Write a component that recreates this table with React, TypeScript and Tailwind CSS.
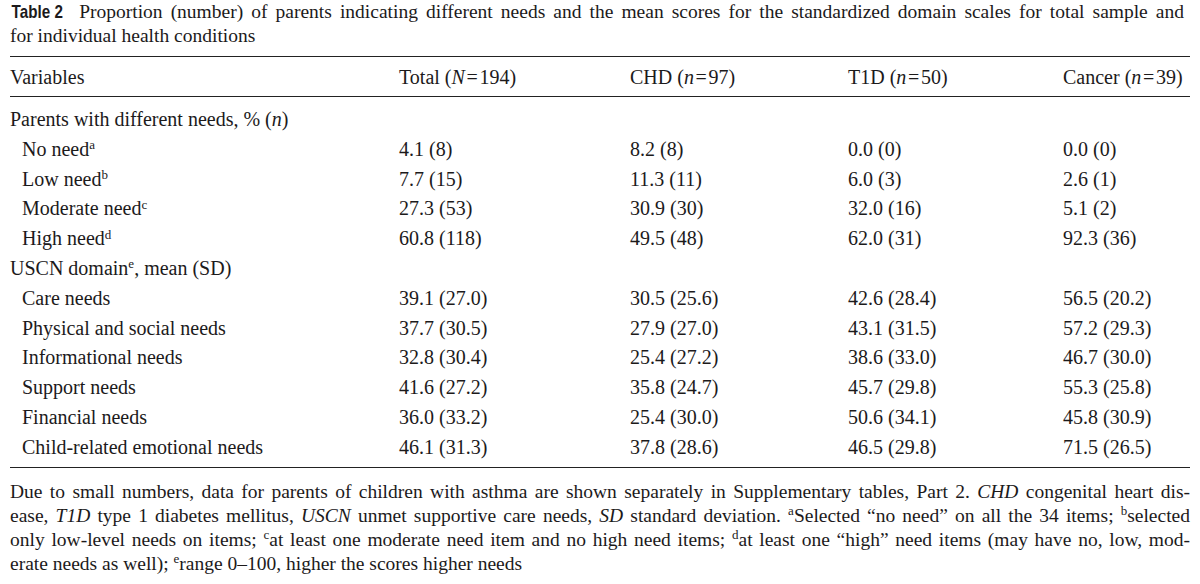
import React from "react";

const serif = { fontFamily: '"Liberation Serif", "Times New Roman", serif' };

type Row = { label: React.ReactNode; vals: string[]; indent: boolean };

const Sup = ({ c }: { c: string }) => <sup className="text-[13px]">{c}</sup>;

const rows: Row[] = [
  { label: <>Parents with different needs, % (<i>n</i>)</>, vals: [], indent: false },
  { label: <>No need<Sup c="a" /></>, vals: ["4.1 (8)", "8.2 (8)", "0.0 (0)", "0.0 (0)"], indent: true },
  { label: <>Low need<Sup c="b" /></>, vals: ["7.7 (15)", "11.3 (11)", "6.0 (3)", "2.6 (1)"], indent: true },
  { label: <>Moderate need<Sup c="c" /></>, vals: ["27.3 (53)", "30.9 (30)", "32.0 (16)", "5.1 (2)"], indent: true },
  { label: <>High need<Sup c="d" /></>, vals: ["60.8 (118)", "49.5 (48)", "62.0 (31)", "92.3 (36)"], indent: true },
  { label: <>USCN domain<Sup c="e" />, mean (SD)</>, vals: [], indent: false },
  { label: "Care needs", vals: ["39.1 (27.0)", "30.5 (25.6)", "42.6 (28.4)", "56.5 (20.2)"], indent: true },
  { label: "Physical and social needs", vals: ["37.7 (30.5)", "27.9 (27.0)", "43.1 (31.5)", "57.2 (29.3)"], indent: true },
  { label: "Informational needs", vals: ["32.8 (30.4)", "25.4 (27.2)", "38.6 (33.0)", "46.7 (30.0)"], indent: true },
  { label: "Support needs", vals: ["41.6 (27.2)", "35.8 (24.7)", "45.7 (29.8)", "55.3 (25.8)"], indent: true },
  { label: "Financial needs", vals: ["36.0 (33.2)", "25.4 (30.0)", "50.6 (34.1)", "45.8 (30.9)"], indent: true },
  { label: "Child-related emotional needs", vals: ["46.1 (31.3)", "37.8 (28.6)", "46.5 (29.8)", "71.5 (26.5)"], indent: true },
];

const grid = "grid grid-cols-[389px_231px_218px_215px_1fr]";

export default function App() {
  return (
    <div className="w-[1200px] h-[584px] bg-white text-[#1c1a1b] overflow-hidden px-[10px]" style={serif}>
      <div className="text-[19.5px] leading-[24px]">
        <div className="text-justify [text-align-last:justify] pr-[6px]">
          <span
            className="inline-block origin-left scale-x-[0.8] font-bold mr-[-5px] pl-[2px]"
            style={{ fontFamily: '"Liberation Sans", Arial, sans-serif', fontSize: "19px" }}
          >
            Table 2
          </span>{" "}
          Proportion (number) of parents indicating different needs and the mean scores for the standardized domain scales for total sample and
        </div>
        <div>for individual health conditions</div>
      </div>

      <div className="mt-[8px] border-t-[1.5px] border-b-[1.5px] border-[#222]">
        <div className={`${grid} h-[39px] items-center text-[20px]`}>
          <div>Variables</div>
          <div>Total (<i>N</i>&#8202;=&#8202;194)</div>
          <div>CHD (<i>n</i>&#8202;=&#8202;97)</div>
          <div>T1D (<i>n</i>&#8202;=&#8202;50)</div>
          <div>Cancer (<i>n</i>&#8202;=&#8202;39)</div>
        </div>
      </div>

      <div className="pt-[7px] pb-[5px] border-b-[1.5px] border-[#222] text-[20px]">
        {rows.map((r, i) => (
          <div key={i} className={`${grid} h-[29.8px] items-center`}>
            <div className={r.indent ? "pl-[12px]" : ""}>{r.label}</div>
            {r.vals.map((v, j) => (
              <div key={j}>{v}</div>
            ))}
          </div>
        ))}
      </div>

      <div className="mt-[12px] text-[19.5px] leading-[24px] text-justify">
        <div className="[text-align-last:justify]">
          Due to small numbers, data for parents of children with asthma are shown separately in Supplementary tables, Part 2. <i>CHD</i> congenital heart dis-
        </div>
        <div className="[text-align-last:justify]">
          ease, <i>T1D</i> type 1 diabetes mellitus, <i>USCN</i> unmet supportive care needs, <i>SD</i> standard deviation. <Sup c="a" />Selected “no need” on all the 34 items; <Sup c="b" />selected
        </div>
        <div className="[text-align-last:justify]">
          only low-level needs on items; <Sup c="c" />at least one moderate need item and no high need items; <Sup c="d" />at least one “high” need items (may have no, low, mod-
        </div>
        <div>
          erate needs as well); <Sup c="e" />range 0–100, higher the scores higher needs
        </div>
      </div>
    </div>
  );
}
